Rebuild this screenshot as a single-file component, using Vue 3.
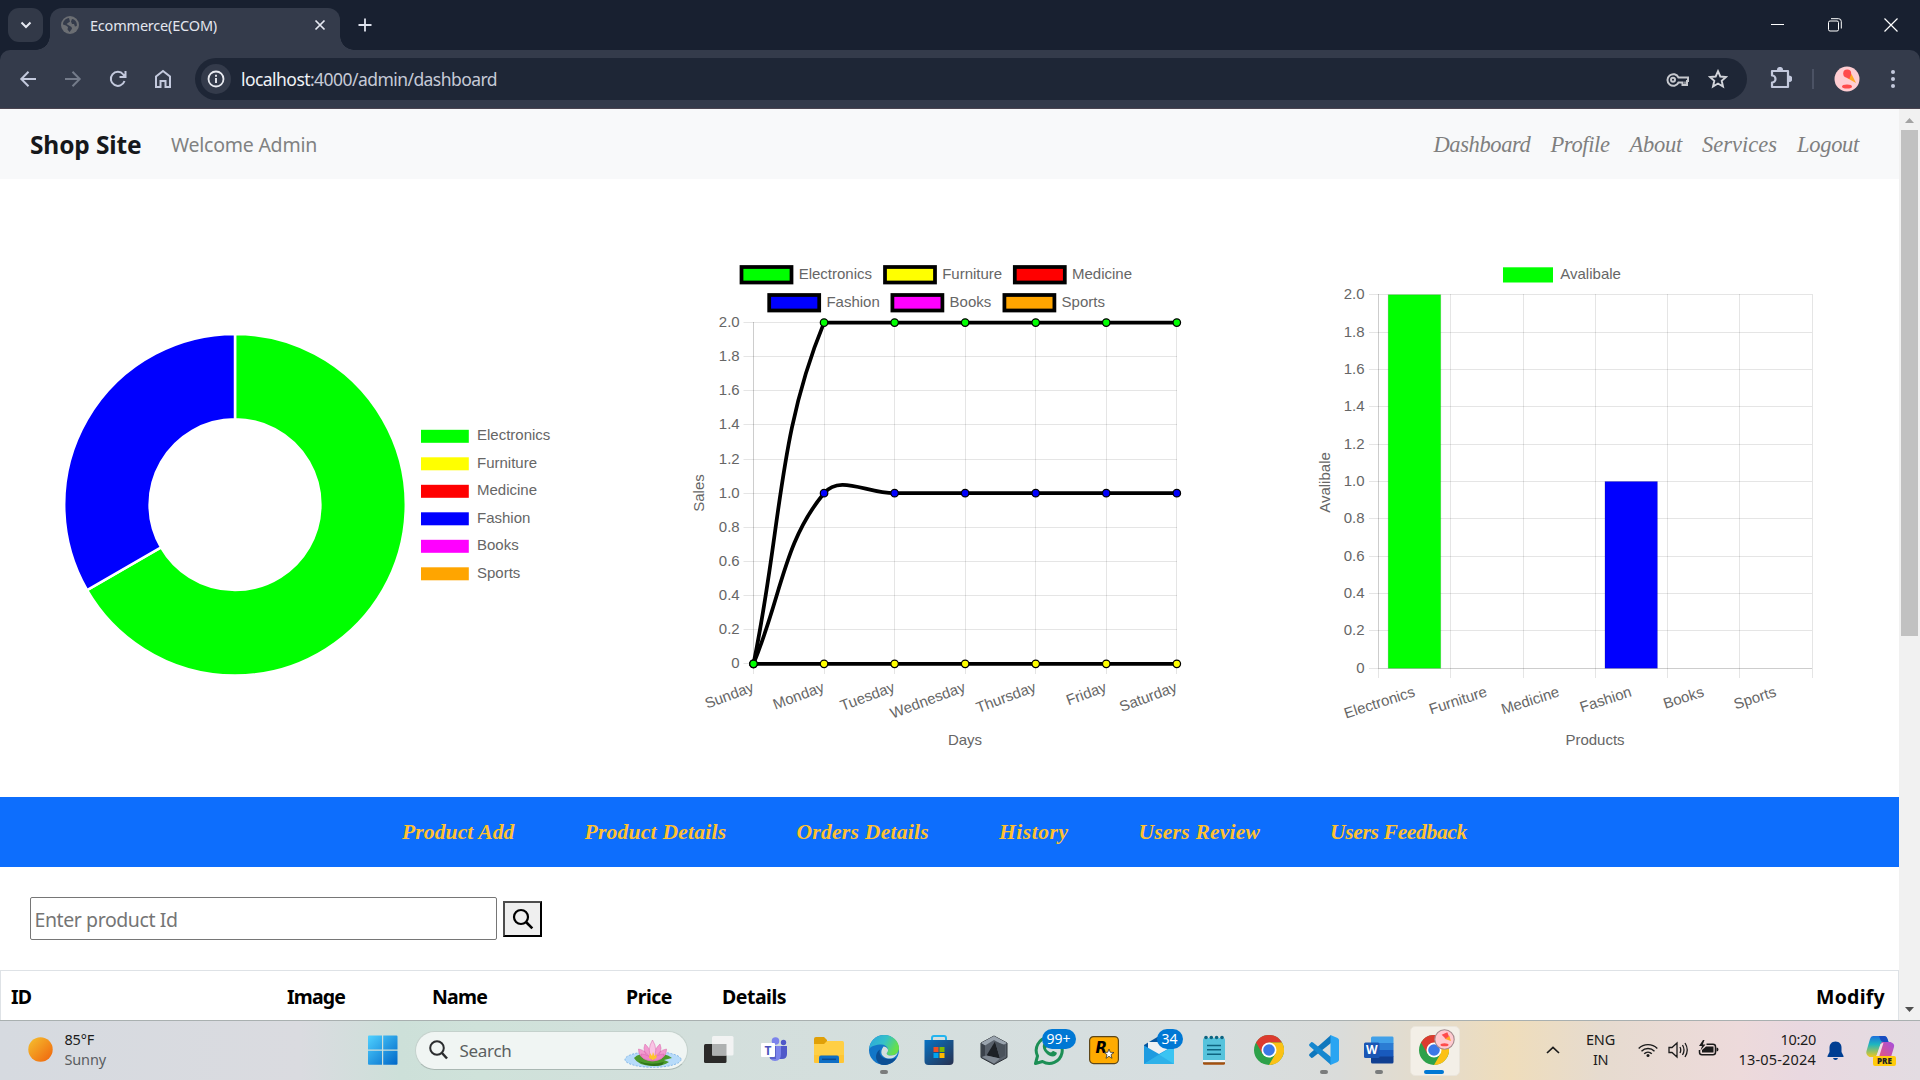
<script setup>
// Tracks a label so that it fills the given width in pixels.
const vFit = {
  mounted(el, { value }) {
    const width = el.getBoundingClientRect().width
    el.style.letterSpacing = `${(value - width) / el.textContent.trim().length}px`
  }
}

const categories = [
  { name: 'Electronics', color: '#00ff00' },
  { name: 'Furniture', color: '#ffff00' },
  { name: 'Medicine', color: '#ff0000' },
  { name: 'Fashion', color: '#0000ff' },
  { name: 'Books', color: '#ff00ff' },
  { name: 'Sports', color: '#ffa500' }
]
const links = [
  ['Dashboard', 97], ['Profile', 59], ['About', 52.5], ['Services', 75], ['Logout', 62]
]
const actions = [
  ['Product Add', 112.5], ['Product Details', 142], ['Orders Details', 132.5],
  ['History', 69.5], ['Users Review', 121.5], ['Users Feedback', 137]
]
const heads = [
  ['ID', 20, 276], ['Image', 58, 145], ['Name', 55, 194], ['Price', 46, 96], ['Details', 64, 1094], ['Modify', 69, 82]
]

// Doughnut
const cx = 235, cy = 504.7, R = 170.8, r = 85.4
const at = (rad, deg) => {
  const a = (deg - 90) * Math.PI / 180
  return `${cx + rad * Math.cos(a)} ${cy + rad * Math.sin(a)}`
}
const slice = (a, b) => {
  const big = b - a > 180 ? 1 : 0
  return `M${at(R, a)}A${R} ${R} 0 ${big} 1 ${at(R, b)}L${at(r, b)}A${r} ${r} 0 ${big} 0 ${at(r, a)}Z`
}

// Line chart
const days = ['Sunday', 'Monday', 'Tuesday', 'Wednesday', 'Thursday', 'Friday', 'Saturday']
const ticks = ['0', '0.2', '0.4', '0.6', '0.8', '1.0', '1.2', '1.4', '1.6', '1.8', '2.0']
const lx = i => 753.5 + i * 70.55
const ly = v => 663.8 - v * 170.6
const snap = v => Math.floor(v) + 0.5
const series = [
  { color: '#ffff00', values: [0, 0, 0, 0, 0, 0, 0] },
  { color: '#0000ff', values: [0, 1, 1, 1, 1, 1, 1] },
  { color: '#00ff00', values: [0, 2, 2, 2, 2, 2, 2] }
]
const clamp = y => Math.max(ly(2), Math.min(ly(0), y))
function curve(values) {
  const p = values.map((v, i) => ({ x: lx(i), y: ly(v) }))
  const c = p.map((cur, i) => {
    const a = p[Math.max(0, i - 1)], b = p[Math.min(p.length - 1, i + 1)]
    const d1 = Math.hypot(cur.x - a.x, cur.y - a.y), d2 = Math.hypot(b.x - cur.x, b.y - cur.y)
    const f1 = 0.4 * d1 / (d1 + d2), f2 = 0.4 * d2 / (d1 + d2)
    return {
      ax: cur.x - f1 * (b.x - a.x), ay: clamp(cur.y - f1 * (b.y - a.y)),
      bx: cur.x + f2 * (b.x - a.x), by: clamp(cur.y + f2 * (b.y - a.y))
    }
  })
  return p.map((q, i) => i
    ? `C${c[i - 1].bx} ${c[i - 1].by} ${c[i].ax} ${c[i].ay} ${q.x} ${q.y}`
    : `M${q.x} ${q.y}`).join('')
}
const lineLegend = [
  [741.5, 267, 0], [885, 267, 1], [1014.8, 267, 2], [769.2, 295, 3], [892.4, 295, 4], [1004.4, 295, 5]
]

// Bar chart
const bx = i => 1378.5 + i * 72.25
const by = v => 668.3 - v * 186.8
const bars = [[0, 2], [3, 1]]
</script>

<template>
  <div class="screen">
    <header class="tabs">
      <div class="drop"><svg width="12" height="8" viewBox="0 0 12 8"><path d="M1.5 1.5 6 6l4.500-4.500" fill="none" stroke="#e6e9f2" stroke-width="2" /></svg></div>
      <div class="tab">
        <svg width="18" height="18" viewBox="0 0 18 18"><circle cx="9" cy="9" r="9" fill="#6b6e73" /><path d="M8 2C4.500 2.500 2 5 2 8.500l3 1 2 1.500-.5 2.500 2 2.500c1-.5 1-2 2.500-3l-.5-2-2.500-1.500L5.500 8 9 5.500 8.500 4zM11 3l-1 2.500 1 2.500 2 0 1 2.500 1.800-.5C16.500 6 13.500 3.200 11 3z" fill="#343b4b" /></svg>
        <span class="tab-title"><span v-fit="127" class="fit">Ecommerce(ECOM)</span></span>
        <svg class="x" width="12" height="12" viewBox="0 0 12 12"><path d="M1.500 1.500l9 9M10.500 1.500l-9 9" stroke="#e6e9f2" stroke-width="1.700" /></svg>
      </div>
      <svg class="plus" width="14" height="14" viewBox="0 0 14 14"><path d="M7 .5v13M.5 7h13" stroke="#dfe3ee" stroke-width="1.800" /></svg>
      <div class="win">
        <svg width="14" height="14" viewBox="0 0 14 14"><path d="M0 6.500h13" stroke="#fff" /></svg>
        <svg width="14" height="14" viewBox="0 0 14 14" fill="none" stroke="#fff"><rect x=".5" y="3" width="10" height="10" rx="1.500" /><path d="M3 .700h7.500a2.800 2.800 0 0 1 2.800 2.800V10.500" /></svg>
        <svg width="14" height="14" viewBox="0 0 14 14"><path d="M.5.5l13 13M13.500.5l-13 13" stroke="#fff" stroke-width="1.200" /></svg>
      </div>
    </header>

    <div class="toolbar">
      <div class="navs">
        <svg width="18" height="18" viewBox="0 0 18 18" fill="none" stroke="#c3c9dd" stroke-width="2"><path d="M17 9H3M9.500 1.800 2.300 9l7.200 7.200" /></svg>
        <svg width="18" height="18" viewBox="0 0 18 18" fill="none" stroke="#747b8a" stroke-width="2"><path d="M1 9h14M8.500 1.800 15.700 9l-7.200 7.200" /></svg>
        <svg width="18" height="18" viewBox="0 0 18 18" fill="none" stroke="#c3c9dd" stroke-width="2"><path d="M15.500 11A7 7 0 1 1 14.300 4.500L16 6.500M16.500 1v6h-6" /></svg>
        <svg width="18" height="20" viewBox="0 0 18 20" fill="none" stroke="#c3c9dd" stroke-width="2"><path d="M2 7.500 9 2l7 5.500V18h-4.500v-6h-5v6H2z" /></svg>
      </div>
      <div class="omni">
        <div class="info"><svg width="18" height="18" viewBox="0 0 18 18"><circle cx="9" cy="9" r="7.500" fill="none" stroke="#e8eaf0" stroke-width="1.800" /><path d="M9 8v5M9 4.800v1.900" stroke="#e8eaf0" stroke-width="1.900" /></svg></div>
        <span v-fit="256" class="fit url"><b>localhost</b>:4000/admin/dashboard</span>
        <svg class="key" width="24" height="16" viewBox="0 0 24 16" fill="none" stroke="#c6c8ce" stroke-width="2"><path d="M12.500 5.500H22v3.500h-1v4h-4.500v-2.500h-4A5.800 5.800 0 1 1 12.500 5.500z" /><circle cx="7" cy="7.800" r="2" /><path d="M19 9.500V12" stroke-width="1.200" /></svg>
        <svg width="20" height="20" viewBox="0 0 20 20" fill="none" stroke="#d2d4da" stroke-width="1.900"><path d="m10 2.200 2.300 5.300 5.700.5-4.300 3.800 1.300 5.700-5-3-5 3 1.300-5.700L2 8l5.700-.5z" /></svg>
      </div>
      <svg class="ext" width="22" height="22" viewBox="0 0 22 22" fill="none" stroke="#c3c9dd" stroke-width="2.200" stroke-linejoin="round"><path d="M2 4h16v16H2v-4.500a3.500 3.500 0 0 0 0-7z" /><path d="M8 3a2 2 0 0 1 4 0M19 9.500a2 2 0 0 1 0 4.500" fill="#c3c9dd" /></svg>
      <i class="sep"></i>
      <svg class="ava" width="26" height="26" viewBox="0 0 26 26"><circle cx="13" cy="13" r="12.500" fill="#ffcdd2" /><path d="m13 12 4.500-4 4.500 9z" fill="#ffa726" /><circle cx="13.200" cy="7.600" r="4" fill="#ff4b4b" /><path d="m11.500 11 4 2 1-4z" fill="#ff4b4b" /><ellipse cx="13" cy="20.500" rx="5" ry="2" fill="#ff4b4b" /></svg>
      <svg class="dots" width="6" height="20" viewBox="0 0 6 20" fill="#c3c9dd"><circle cx="3" cy="3" r="2" /><circle cx="3" cy="10" r="2" /><circle cx="3" cy="17" r="2" /></svg>
    </div>

    <div class="view">
      <main class="page">
        <nav class="navbar">
          <span class="brand"><span v-fit="111.500" class="fit">Shop Site</span></span>
          <span class="welcome"><span v-fit="146" class="fit">Welcome Admin</span></span>
          <div class="links"><span v-for="l in links" :key="l[0]" v-fit="l[1]" class="fit">{{ l[0] }}</span></div>
        </nav>

        <section class="charts">
          <svg width="633" height="618" viewBox="0 179 633 618">
            <g stroke="#fff" stroke-width="2.500" stroke-linejoin="bevel">
              <path :d="slice(0, 240)" fill="#00ff00" />
              <path :d="slice(240, 360)" fill="#0000ff" />
            </g>
            <g v-for="(c, i) in categories" :key="c.name">
              <rect x="421" :y="429.800 + i * 27.500" width="47.800" height="13" :fill="c.color" />
              <text x="477" :y="440.200 + i * 27.500">{{ c.name }}</text>
            </g>
          </svg>

          <svg width="633" height="618" viewBox="633 179 633 618">
            <g v-for="l in lineLegend" :key="l[0]">
              <rect :x="l[0]" :y="l[1]" width="50" height="15.500" :fill="categories[l[2]].color" stroke="#000" stroke-width="3.750" />
              <text :x="l[0] + 57.200" :y="l[1] + 12.200">{{ categories[l[2]].name }}</text>
            </g>
            <g stroke="#000" stroke-opacity=".1">
              <path v-for="(t, i) in ticks" :key="t" :d="`M743.500 ${snap(ly(i * 0.200))}H1177`" />
              <path v-for="(d, i) in days" :key="d" :d="`M${snap(lx(i))} 322V674`" />
              <path d="M753.500 322V664" />
            </g>
            <text v-for="(t, i) in ticks" :key="t" class="tick" x="739.700" :y="ly(i * 0.200) + 4.500">{{ t }}</text>
            <text v-for="(d, i) in days" :key="d" class="tick" :transform="`translate(${lx(i) + 1.300} 691) rotate(-20.500)`">{{ d }}</text>
            <text class="mid" x="965" y="745">Days</text>
            <text class="mid" transform="translate(704 493) rotate(-90)">Sales</text>
            <path v-for="s in series" :key="s.color" :d="curve(s.values)" fill="none" stroke="#000" stroke-width="3.750" />
            <g v-for="s in series" :key="s.color" :fill="s.color" stroke="#000" stroke-width="1.250">
              <circle v-for="(v, i) in s.values" :key="i" :cx="lx(i)" :cy="ly(v)" r="3.750" />
            </g>
          </svg>

          <svg width="633" height="618" viewBox="1266 179 633 618">
            <rect x="1503" y="267.300" width="50" height="15.200" fill="#00ff00" />
            <text x="1560.300" y="279.200">Avalibale</text>
            <g stroke="#000" stroke-opacity=".1">
              <path v-for="(t, i) in ticks" :key="t" :d="`M1369 ${snap(by(i * 0.200))}H1812`" />
              <path v-for="i in 7" :key="i" :d="`M${snap(bx(i - 1))} 294V678`" />
              <path d="M1378.500 294V668.500H1812" fill="none" />
            </g>
            <rect v-for="b in bars" :key="b[0]" :x="bx(b[0]) + 9.700" :y="by(b[1])" width="52.500" :height="by(0) - by(b[1])" :fill="categories[b[0]].color" stroke="#000" stroke-opacity=".12" />
            <text v-for="(t, i) in ticks" :key="t" class="tick" x="1364.500" :y="by(i * 0.200) + 4.500">{{ t }}</text>
            <text v-for="(c, i) in categories" :key="c.name" class="tick" :transform="`translate(${bx(i) + 37.300} 696) rotate(-18)`">{{ c.name }}</text>
            <text class="mid" x="1595" y="745">Products</text>
            <text class="mid" transform="translate(1330 482.500) rotate(-90)">Avalibale</text>
          </svg>
        </section>

        <section class="actions"><span v-for="a in actions" :key="a[0]" v-fit="a[1]" class="fit">{{ a[0] }}</span></section>

        <section class="find">
          <div class="field"><span v-fit="143" class="fit">Enter product Id</span></div>
          <div class="go"><svg width="22" height="22" viewBox="0 0 22 22" fill="none" stroke="#000" stroke-width="2.200"><circle cx="9" cy="9" r="7" /><path d="m14 14 6.300 6.300" stroke-width="2.600" /></svg></div>
        </section>

        <div class="table"><div v-for="h in heads" :key="h[0]" class="th" :style="{ width: h[2] + 'px' }"><span v-fit="h[1]" class="fit">{{ h[0] }}</span></div></div>
      </main>
      <aside class="scroll">
        <svg width="21" height="21" viewBox="0 0 21 21"><path d="m6 14 4.500-5 4.500 5z" fill="#a3a3a3" /></svg>
        <div class="thumb"></div>
        <svg class="down" width="21" height="21" viewBox="0 0 21 21"><path d="m6 8 4.500 5L15 8z" fill="#505050" /></svg>
      </aside>
    </div>

    <footer class="task">
      <div class="weather">
        <svg width="25" height="25" viewBox="0 0 25 25"><defs><linearGradient id="sun" x1="0" y1="0" x2="1" y2="1"><stop offset="0" stop-color="#f5c22f" /><stop offset="1" stop-color="#f0620c" /></linearGradient></defs><circle cx="12.500" cy="12.500" r="12.200" fill="url(#sun)" /></svg>
        <div class="two"><div><span v-fit="29.500" class="fit">85°F</span></div><div class="dim"><span v-fit="41.500" class="fit">Sunny</span></div></div>
      </div>
      <svg class="start" width="30" height="30" viewBox="0 0 30 30"><defs><linearGradient id="st" x1="0" y1="0" x2="1" y2="1"><stop offset="0" stop-color="#4fd1ff" /><stop offset="1" stop-color="#0067c8" /></linearGradient></defs><path d="M0 1.500Q0 .5 1 .5h13v14H0zM15.200.5H28.500q1 0 1 1v13H15.200zM0 15.700h14v14H1q-1 0-1-1zM15.200 15.700h14.300v13q0 1-1 1H15.200z" fill="url(#st)" /></svg>
      <div class="search">
        <svg width="19" height="20" viewBox="0 0 19 20" fill="none" stroke="#2a2c2e" stroke-width="2"><circle cx="8" cy="8" r="6.800" /><path d="m13 13 5 5.500" stroke-width="2.500" /></svg>
        <span class="s-text"><span v-fit="52" class="fit">Search</span></span>
        <svg width="58" height="28" viewBox="0 0 58 28">
          <ellipse cx="29" cy="19.500" rx="28" ry="7.800" fill="#b7dbfa" stroke="#7fb4e6" stroke-dasharray="2 1.500" />
          <path d="M10 18q4-5 18-5t20 5l-8 2 5 2q-6 4.500-17 4-14-.5-18-8z" fill="#4c9a2a" /><path d="M14 21q12 5 26 1l-2 3q-14 3-24-4z" fill="#2f7319" />
          <g fill="#f29bd0" stroke="#d765ab" stroke-width=".5"><path d="M28 21Q14 19 14.500 9q8 1 13.500 12zM29 21q14-2 13.500-12-8 1-13.500 12zM28 21Q17 12 21 4q6 5 8 17zM29 21Q40 12 36 4q-6 5-8 17z" /><path d="M28.500 21Q22 10 28.500 0 35 10 28.500 21z" fill="#f9c4e4" /><path d="M28 21q-11-1-11-7 8 0 11 7zM29 21q11-1 11-7-8 0-11 7z" fill="#ee85c6" /></g>
          <path d="m25 18 1-5 2 3 1-4 1.500 4 2-2v4l-3.500 2z" fill="#ffc52b" />
        </svg>
      </div>
      <div class="apps">
        <div class="app"><svg width="30" height="30" viewBox="0 0 30 30"><rect x="0" y="9" width="22.500" height="19" rx="1.500" fill="#2b2a29" /><rect x="8" y="1" width="21.500" height="19.500" rx="1.500" fill="#f2f3f3" /><path d="M8 9h14.500v11.500H8z" fill="#aeb1b1" /></svg></div>
        <div class="app"><svg width="30" height="30" viewBox="0 0 30 30"><circle cx="16.500" cy="6" r="3.800" fill="#7b83eb" /><circle cx="24.500" cy="7.500" r="2.700" fill="#5059c9" /><path d="M20 11h8v8q0 5-5 5h-3z" fill="#5059c9" /><path d="M10 11h12v8q0 7-6 7t-6-7z" fill="#7b83eb" /><path d="M10 11h7v13h-6z" fill="#4b53bc" opacity=".7" /><rect x="2" y="8" width="14" height="14" rx="1" fill="#fff" /><text x="9" y="19.500" class="teams">T</text></svg></div>
        <div class="app"><svg width="30" height="30" viewBox="0 0 30 30"><path d="M0 4q0-2 2-2h8l3 3v6H0z" fill="#e0a008" /><path d="M0 9h10l3-3h15.500Q30 6 30 8v18.500q0 1.500-1.500 1.500h-27Q0 28 0 26.500z" fill="#ffcf45" /><path d="M0 20h30v6.500q0 1.500-1.500 1.500h-27Q0 28 0 26.500z" fill="#ffbf2b" opacity=".6" /><path d="M5 28v-5.500q0-2 2-2h16q2 0 2 2V28z" fill="#0f6fc5" /><path d="M8 24.300h14" stroke="#0a4a90" stroke-width="1.500" /></svg></div>
        <div class="app run"><svg width="30" height="30" viewBox="0 0 30 30"><defs><linearGradient id="ed" x1="0" y1="0" x2="1" y2=".4"><stop offset="0" stop-color="#2aa5e0" /><stop offset=".55" stop-color="#35c1c8" /><stop offset="1" stop-color="#66e04a" /></linearGradient></defs><circle cx="15" cy="15" r="15" fill="#1276c8" /><path d="M.2 14C1 5 8 0 15 0c9 0 15 6.500 15 13 0 5-4 7.500-8 7.500-4.500 0-5-2-3.500-3.500 1.500-2.500 0-7-6-7.500C7 9.500 2 11 .2 14z" fill="url(#ed)" /><path d="M11 14.500C9 20 14 26.500 27.500 23 24 28.500 19 30 15 30 8 30 6 23 7.500 19c.8-2.200 2-3.500 3.500-4.500z" fill="#0c4f94" /><path d="M14.500 11.500c4 .5 5.500 3.500 4 5.500-1.500 1.500-1 3.500 3.500 3.500 3 0 5.500-1 7-3.500-1.500 5-5.500 7-10 6.500-6-1-9-6-4.500-12z" fill="#d5dfdd" /></svg></div>
        <div class="app"><svg width="30" height="30" viewBox="0 0 30 30"><defs><linearGradient id="so" x1="0" y1="0" x2="1" y2="1"><stop offset="0" stop-color="#0873c4" /><stop offset="1" stop-color="#28304f" /></linearGradient></defs><path d="M8 6V3q0-2 2-2h10q2 0 2 2v3" fill="none" stroke="#23b4ee" stroke-width="2" /><path d="M.5 5h29v21q0 4-4 4h-21q-4 0-4-4z" fill="url(#so)" /><path d="M9.500 12h5v5h-5z" fill="#f25022" /><path d="M15.500 12h5v5h-5z" fill="#7fba00" /><path d="M9.500 18h5v5h-5z" fill="#00a4ef" /><path d="M15.500 18h5v5h-5z" fill="#ffb900" /></svg></div>
        <div class="app"><svg width="30" height="30" viewBox="0 0 30 30"><path d="M15 1 28 8v14.500L15 29.500 2 22.500V8z" fill="#59616b" stroke="#2b3036" /><path d="M15 1 28 8l-4 2-9-5-9 5.500L2 8z" fill="#9aa4ae" /><path d="M2.500 8.500 6 10.500v10L2.500 22z" fill="#3b424b" /><path d="M16 6.500 7.500 20.500l13.500 3z" fill="#1d2126" /><path d="M16 6.500 21 23.500l5-3V10z" fill="#4a525b" /><path d="M3 22 7.500 20.500l13.500 3-6 5z" fill="#7f8892" /></svg></div>
        <div class="app"><svg width="30" height="30" viewBox="0 0 30 30"><path d="M1.500 28.500 3.500 21A13 13 0 1 1 8.500 26.500z" fill="none" stroke="#1c8f55" stroke-width="3" stroke-linejoin="round" /><path d="M9 9.500c2-2.500 3-1 4 1.500.5 1-1 2-1 2.500 1 2 3 3.500 5 4 .5 0 1.500-2 2.500-1.500l3 1.500c1 .5-.5 4-3.500 4C14 21.500 7.500 15 9 9.500z" fill="#1c8f55" /></svg><em class="badge"><span>99+</span></em></div>
        <div class="app"><svg width="30" height="30" viewBox="0 0 30 30"><rect x=".6" y="1.600" width="28.800" height="27" rx="4" fill="#ffab00" stroke="#5d4618" stroke-width="1.200" /><text x="6.500" y="17.500" class="rock">R</text><path d="m20 14 1.300 3.300 3.700.2-3 2.200 1 3.600-3-2-3 2 1-3.600-3-2.200 3.700-.2z" fill="#fff" stroke="#222" stroke-width=".7" /></svg></div>
        <div class="app"><svg width="30" height="30" viewBox="0 0 30 30"><path d="M0 10 15 1l15 9v5H0z" fill="#0a569e" /><path d="M4 7h22v14H4z" fill="#eef0f2" /><path d="M0 10.500 15 19l15-8.500V29H0z" fill="#1e9be0" /><path d="M0 29 30 10.500V29z" fill="#3bc4f2" /><path d="M15 19.500 30 29H0z" fill="#2aa9e6" opacity=".7" /></svg><em class="badge two-d"><span>34</span></em></div>
        <div class="app"><svg width="30" height="30" viewBox="0 0 30 30"><rect x="4" y="3" width="22" height="26" rx="1.500" fill="#56c3dc" /><path d="M4 25h22v2.500H4z" fill="#f3f3f3" /><path d="M4 27.300h22v1q0 1.500-1.500 1.500h-19Q4 29.800 4 28.300z" fill="#a4500f" /><path d="M8 10.500h14M8 14.800h14M8 19.200h14" stroke="#0e6480" stroke-width="1.600" /><g fill="#0e6480"><circle cx="7" cy="2.500" r="1.800" /><circle cx="12.300" cy="2.500" r="1.800" /><circle cx="17.600" cy="2.500" r="1.800" /><circle cx="23" cy="2.500" r="1.800" /></g></svg></div>
        <div class="app"><svg width="30" height="30" viewBox="0 0 30 30"><g id="chrome"><circle cx="15" cy="15" r="15" fill="#2da14a" /><path d="M2 7.500A15 15 0 0 1 28 7.500H15L8.500 18.750z" fill="#dc3b2f" /><path d="M28 7.500A15 15 0 0 1 15 30L21.500 18.750 15 7.500z" fill="#fbc116" /><circle cx="15" cy="15" r="7.500" fill="#fff" /><circle cx="15" cy="15" r="5.800" fill="#3b78e7" /></g></svg></div>
        <div class="app run"><svg width="30" height="30" viewBox="0 0 30 30"><path d="M22 0v8L4 22.500Q2.500 23.500 1.500 22L.5 21q-1-1 .2-2.200L22 0z" fill="#0f77bd" /><path d="M22 30v-8L4 7.500Q2.500 6.500 1.500 8L.5 9q-1 1 .2 2.200L22 30z" fill="#1687cf" /><path d="m21.500 0 7 3Q30 3.800 30 5v20q0 1.200-1.500 2l-7 3z" fill="#2aa5f2" /></svg></div>
        <div class="app run"><svg width="30" height="30" viewBox="0 0 30 30"><path d="M7 3q0-1.500 1.500-1.500h20Q29.500 1.500 29.500 3v5.500H7z" fill="#41a0e8" /><path d="M7 8h22.500v7H7z" fill="#2b7cd3" /><path d="M7 15h22.500v7H7z" fill="#185abd" /><path d="M7 21.500h22.500V27q0 1.500-1.500 1.500H8.500Q7 28.500 7 27z" fill="#103f91" /><rect x="0" y="7.500" width="15.500" height="15.500" rx="1.500" fill="#1a56b4" /><text x="7.700" y="19.300" class="word">W</text></svg></div>
        <div class="app on"><svg width="30" height="30" viewBox="0 0 30 30"><use href="#chrome" /></svg><svg class="mini" width="21" height="21" viewBox="0 0 26 26"><circle cx="13" cy="13" r="12" fill="#ffc9cf" stroke="#a58a8d" stroke-width="1.400" /><path d="m13 12 6-3.500 2 6.500z" fill="#ffa726" /><path d="m9.500 7 7-3 2 5-4 3z" fill="#ff4b4b" /><ellipse cx="13" cy="19.500" rx="5" ry="2" fill="#ff4b4b" /></svg></div>
      </div>
      <div class="tray">
        <svg class="caret" width="14" height="8" viewBox="0 0 14 8" fill="none" stroke="#1b1b1b" stroke-width="1.700"><path d="M1 7l6-5.700L13 7" /></svg>
        <div class="two lang"><div><span v-fit="29" class="fit">ENG</span></div><div><span v-fit="15" class="fit">IN</span></div></div>
        <svg class="wifi" width="20" height="16" viewBox="0 0 20 16" fill="none" stroke="#1b1b1b" stroke-width="1.400"><path d="M.7 6.500a13 13 0 0 1 18.600 0M3.500 9.200a9.300 9.300 0 0 1 13 0M6.200 11.700a5.600 5.600 0 0 1 7.600 0" /><circle cx="10" cy="13.500" r="1.500" fill="#1b1b1b" stroke="none" /></svg>
        <svg class="vol" width="21" height="18" viewBox="0 0 21 18" fill="none" stroke="#1b1b1b" stroke-width="1.300"><path d="M1 6.500h3L9 2v14l-5-4.500H1zM12 6q1.500 3 0 6M14.500 4q3 5 0 10M17 2q4.500 7 0 14" /></svg>
        <svg class="bat" width="21" height="18" viewBox="0 0 21 18"><path d="M8.500 4.200H15q2.500 0 2.500 2.500v5.600q0 2.500-2.500 2.500H4q-2.500 0-2.500-2.500V10" fill="none" stroke="#1b1b1b" stroke-width="1.500" /><path d="M4 12.500V10L8 6.500h7.500v6z" fill="#1b1b1b" /><path d="M18.500 7.500q2 0 2 2t-2 2zM5 0 1 6h3L2.500 10.500 7.500 4.500H4.800L6.500 0z" fill="#1b1b1b" /></svg>
        <div class="two clock"><div><span v-fit="35.500" class="fit">10:20</span></div><div><span v-fit="77.500" class="fit">13-05-2024</span></div></div>
        <svg class="bell" width="17" height="20" viewBox="0 0 17 20" fill="#003e92"><path d="M8.500.5c-4 0-6 3-6 6v4.500L.5 15v1h16v-1l-2-4V6.500c0-3-2-6-6-6zM6 17h5q-.5 2-2.500 2T6 17z" /></svg>
        <div class="cop"><svg width="29" height="27" viewBox="0 0 29 27"><defs><linearGradient id="c1" x1="0" y1="0" x2="0" y2="1"><stop offset="0" stop-color="#1c6fdc" /><stop offset=".4" stop-color="#1eb6c0" /><stop offset="1" stop-color="#f2c81c" /></linearGradient><linearGradient id="c2" x1="1" y1="0" x2="0" y2="1"><stop offset="0" stop-color="#a44fe0" /><stop offset="1" stop-color="#f0566c" /></linearGradient></defs><path d="M7 0h11q2.500 0 3.500 3l1 3h-5q-2 0-3 3l-3 9q-1 3-4 3H3.500Q-.5 19 .5 15L4 3q.8-3 3-3z" fill="url(#c1)" /><path d="M16 6h8.500q4.500 1.500 3.500 5l-3 10q-1 3-4 3h-8q-2 0-2-3l3-11q.8-3 2-4z" fill="url(#c2)" /><path d="M13 0h5q2.500 0 3.500 3l1 3h-5q-2 0-3-2z" fill="#184bc0" /><path d="m14.500 8 3-1.500-4 13q-1 2-3.500 1.500z" fill="#f1dfe6" /></svg><b>PRE</b></div>
      </div>
    </footer>
  </div>
</template>

<style>
body { background: #fff; overflow: hidden; }
</style>

<style scoped>
.screen { width: 1920px; height: 1080px; display: flex; flex-direction: column; overflow: hidden; font-family: "Noto Sans", "Open Sans", sans-serif; background: #182030; }
.screen * { box-sizing: border-box; }
svg { display: block; flex: none; }
.fit { display: inline-block; white-space: nowrap; }

.tabs { height: 50px; display: flex; background: #182030; padding-left: 8px; flex: none; }
.drop { width: 35px; height: 34px; margin-top: 8px; border-radius: 11px; background: #323948; display: flex; align-items: center; justify-content: center; }
.tab { position: relative; margin: 8px 0 0 7px; width: 290px; height: 42px; background: #343b4b; border-radius: 12px 12px 0 0; display: flex; padding: 8px 0 0 11px; }
.tab::before, .tab::after { content: ""; position: absolute; bottom: 0; width: 14px; height: 14px; }
.tab::before { left: -14px; background: radial-gradient(circle at 0 0, transparent 13.500px, #343b4b 14px); }
.tab::after { right: -14px; background: radial-gradient(circle at 100% 0, transparent 13.500px, #343b4b 14px); }
.tab-title { width: 213px; flex: none; margin-left: 11px; font-size: 14.500px; line-height: 18px; color: #e3e6ee; }
.tab .x { margin: 3px 0 0 11px; }
.plus { margin: 18px 0 0 18px; }
.win { margin-left: auto; padding: 18px 22px 0 0; display: flex; gap: 42.500px; }

.toolbar { height: 59px; flex: none; background: #343b4b; border-bottom: 1px solid #4a4450; border-radius: 10px 10px 0 0; display: flex; align-items: center; position: relative; }
.navs { display: flex; align-items: center; gap: 27px; padding-left: 18.500px; width: 195px; flex: none; }
.omni { width: 1552px; height: 42px; border-radius: 21px; background: #1e2636; display: flex; align-items: center; padding: 0 19.500px 0 6px; }
.info { width: 30px; height: 30px; border-radius: 50%; background: #343b4b; display: flex; align-items: center; justify-content: center; margin-right: 10px; }
.url { font-size: 17.500px; line-height: 24px; color: #c6cad6; }
.url b { font-weight: 400; color: #f0f2f7; }
.key { margin: 2px 18px 0 auto; }
.ext { margin: 0 0 2px 23px; }
.sep { width: 2px; height: 20px; background: #4b5264; margin-left: 20px; }
.ava { margin-left: 20px; }
.dots { margin-left: 29.500px; }

.view { height: 911px; flex: none; display: flex; background: #fff; }
.page { width: 1899px; overflow: hidden; }
.navbar { height: 70px; background: #f8f9fa; display: flex; align-items: center; padding-left: 30px; }
.brand { width: 141px; font-size: 24.500px; font-weight: 700; color: #16181b; line-height: 30px; padding-top: 1px; }
.welcome { font-size: 19.500px; color: #808181; line-height: 30px; padding-top: 1px; }
.links { margin-left: auto; padding-right: 40px; padding-top: 1px; display: flex; gap: 20px; font: italic 22.500px/30px "Liberation Serif", serif; color: #7f7f7f; }
.charts { height: 618px; display: flex; font-family: "Liberation Sans", Arial, sans-serif; }
.charts text { font-size: 15px; fill: #666; }
.charts .tick { text-anchor: end; }
.charts .mid { text-anchor: middle; }
.actions { height: 70px; background: #0d6efd; display: flex; gap: 70px; padding-left: 402px; align-items: center; font: italic 700 21.500px/30px "Liberation Serif", serif; color: #ffc130; }
.find { display: flex; padding: 30px 0 0 30px; height: 103px; }
.field { width: 467px; height: 43px; border: 1px solid #767676; border-radius: 2px; font-size: 19.500px; line-height: 44px; color: #757575; padding-left: 3.500px; }
.go { margin: 4px 0 0 6px; width: 39px; height: 36px; border: 2px solid; border-color: #4d4d4d #000 #000 #4d4d4d; background: #efefef; display: flex; align-items: center; justify-content: center; }
.table { height: 60px; border: 1px solid #dee2e6; display: flex; padding-left: 10px; font-size: 19.500px; font-weight: 700; color: #000; line-height: 52px; }
.th { flex: none; }
.scroll { width: 21px; background: #f1f1f1; display: flex; flex-direction: column; }
.thumb { width: 17px; height: 506px; margin-left: 2px; background: #c1c1c1; }
.down { margin-top: auto; }

.task { height: 60px; flex: none; border-top: 1px solid #a9b0b0; display: flex; background: linear-gradient(90deg, #d6dae0 0, #dadbe0 300px, #cde0d9 400px, #cfe2da 480px, #d3dfdc 700px, #d7dee0 1200px, #dadcda 1340px, #e8dcc6 1460px, #efddbb 1510px, #e6dbcf 1600px, #eddadb 1740px, #e9d8e0 1800px, #e3dce2 1920px); }
.weather { display: flex; width: 367.500px; padding-left: 27.500px; }
.weather svg { margin: 16px 12px 0 0; }
.two { font-size: 14.500px; line-height: 20px; padding-top: 8px; color: #1b1b1b; }
.dim { color: #5a5d60; }
.start { margin-top: 14px; }
.search { margin: 10px 0 0 17px; width: 273px; height: 39px; border-radius: 20px; background: #f0f5f3; border: 1px solid #c4d1cc; border-bottom-color: #aab8b3; display: flex; padding: 8px 0 0 13px; }
.s-text { width: 176px; flex: none; padding-left: 12px; font-size: 17px; line-height: 21px; color: #5b5e5f; }
.apps { display: flex; margin-left: 3.500px; }
.app { width: 55px; padding: 14px 0 0 12.500px; position: relative; }
.run::after, .on::after { content: ""; position: absolute; left: 23.500px; top: 49px; width: 8px; height: 4px; border-radius: 2px; background: #7a7c7c; }
.on::before { content: ""; position: absolute; left: 3.500px; top: 5px; width: 48px; height: 48px; border-radius: 5px; background: #f3efe7; border: 1px solid #eae5db; }
.on::after { left: 17.500px; width: 20px; background: #0078d4; }
.on svg { position: relative; }
.on .mini { position: absolute; left: 28px; top: 8px; }
.badge { position: absolute; left: 20.500px; top: 8px; width: 34px; height: 20px; border-radius: 10px; background: #0078d4; color: #fff; font: 400 14px/19px "Noto Sans", sans-serif; text-align: center; }
.two-d { left: 25.500px; width: 26px; }
.rock { font: italic 700 15px "DejaVu Sans", sans-serif; }
.word { font: 700 12px "Open Sans", sans-serif; fill: #fff; text-anchor: middle; }
.teams { font: 700 12px "Open Sans", sans-serif; fill: #4b53bc; text-anchor: middle; }
.tray { margin-left: auto; display: flex; padding-right: 24px; }
.caret { margin: 25px 26px 0 0; }
.lang { width: 29px; text-align: center; margin-right: 23px; }
.wifi { margin: 21px 10px 0 0; }
.vol { margin: 20px 9px 0 0; }
.bat { margin: 19px 1px 0 0; }
.clock { width: 96px; text-align: right; }
.bell { margin: 20px 22px 0 11px; }
.cop { width: 30px; padding-top: 15px; position: relative; }
.cop b { position: absolute; left: 7px; top: 35px; width: 23px; height: 10px; border-radius: 2px; background: #ffcb0c; font: 800 8px/10px "Open Sans", sans-serif; text-align: center; color: #222; }
</style>
